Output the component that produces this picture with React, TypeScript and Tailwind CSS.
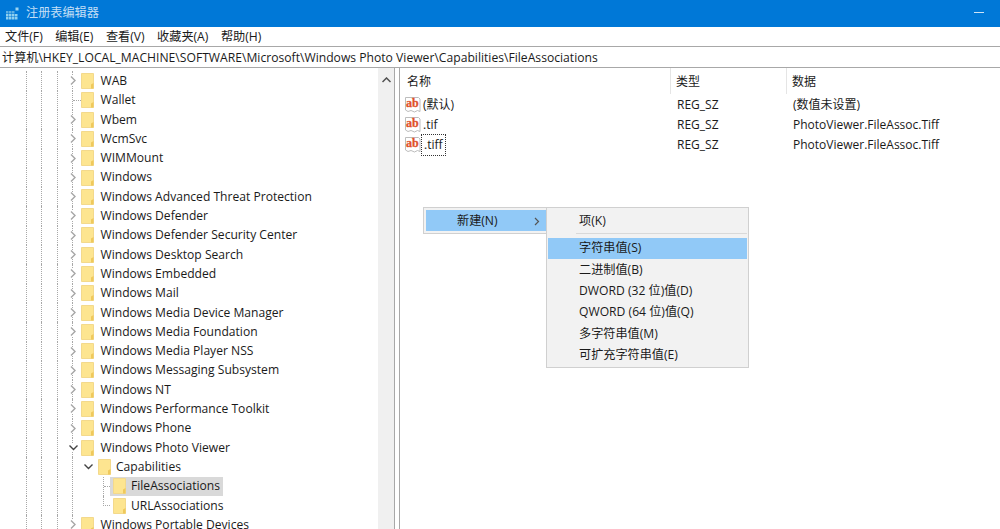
const names = [
  ["WAB", 1],
  ["Wallet", 0],
  ["Wbem", 1],
  ["WcmSvc", 1],
  ["WIMMount", 1],
  ["Windows", 1],
  ["Windows Advanced Threat Protection", 1],
  ["Windows Defender", 1],
  ["Windows Defender Security Center", 1],
  ["Windows Desktop Search", 1],
  ["Windows Embedded", 1],
  ["Windows Mail", 1],
  ["Windows Media Device Manager", 1],
  ["Windows Media Foundation", 1],
  ["Windows Media Player NSS", 1],
  ["Windows Messaging Subsystem", 1],
  ["Windows NT", 1],
  ["Windows Performance Toolkit", 1],
  ["Windows Phone", 1],
] as const;

const values = [
  { name: "(默认)", data: "(数值未设置)" },
  { name: ".tif", data: "PhotoViewer.FileAssoc.Tiff" },
  { name: ".tiff", data: "PhotoViewer.FileAssoc.Tiff", focused: true },
];

const subMenu = [
  "字符串值(S)",
  "二进制值(B)",
  "DWORD (32 位)值(D)",
  "QWORD (64 位)值(Q)",
  "多字符串值(M)",
  "可扩充字符串值(E)",
];

function Folder() {
  return (
    <svg width="13" height="16" viewBox="0 0 13 16" className="shrink-0">
      <path d="M.5.5h12v15H.5z" fill="#fde590" stroke="#f3d98c" />
      <path d="M10 15.500v-4l2.500-1.500v5.500z" fill="#efc95c" />
    </svg>
  );
}

function Chevron({ open }: { open?: boolean }) {
  return (
    <svg width="9" height="9" viewBox="0 0 9 9" className="shrink-0 bg-white">
      {open ? (
        <path d="M.5 2.500l4 4 4-4" fill="none" stroke="#444" strokeWidth="1.400" />
      ) : (
        <path d="M2 .5l4 4-4 4" fill="none" stroke="#a6a6a6" strokeWidth="1.400" />
      )}
    </svg>
  );
}

function AbIcon() {
  return (
    <svg width="16" height="18" viewBox="0 0 16 18" className="shrink-0">
      <path d="M.5 1.500h13l1.500 1.500v12.500l-2.500-1-3 1.500-3.500-1.500-3 1-2.500-1.500z" fill="#fff" stroke="#bdbdbd" />
      <text x="1" y="11" fontSize="12" fontWeight="700" fill="#e0502a" stroke="#e0502a" strokeWidth="0.300" fontFamily="Liberation Serif">ab</text>
    </svg>
  );
}

function VLine({ width }: { width: number }) {
  // widths are fixed, so pick from written-out classes
  const cls = width === 15 ? "w-[15px]" : width === 16 ? "w-[16px]" : "w-[12px]";
  return <div className={`${cls} h-full shrink-0 border-l border-dotted border-[#a8a8a8]`} />;
}

// the dotted guide lines of the tree
function Guides() {
  return (
    <>
      <div className="w-[26px] shrink-0" />
      <VLine width={15} />
      <VLine width={16} />
      <VLine width={15} />
    </>
  );
}

function Expander({ kids, open }: { kids: boolean; open?: boolean }) {
  return (
    <div className="w-[9px] h-full shrink-0 relative border-l border-dotted border-[#a8a8a8] flex items-center">
      {kids ? (
        <div className="absolute -left-[4px] top-[5px]">
          <Chevron open={open} />
        </div>
      ) : (
        <div className="w-[8px] border-t border-dotted border-[#a8a8a8]" />
      )}
    </div>
  );
}

function TreeRow({ label, kids, open }: { label: string; kids: boolean; open?: boolean }) {
  return (
    <div className="flex items-center h-[19.3px]">
      <Guides />
      <Expander kids={kids} open={open} />
      <Folder />
      <span className="ml-[6.500px] whitespace-nowrap">{label}</span>
    </div>
  );
}

function ChildRow({ label, selected, last }: { label: string; selected?: boolean; last?: boolean }) {
  return (
    <div className="flex items-center h-[19.3px]">
      <Guides />
      <div className="w-[31px] h-full shrink-0 border-l border-dotted border-[#a8a8a8]" />
      <div className={`w-[7px] shrink-0 border-l border-dotted border-[#a8a8a8] ${last ? "h-1/2 self-start border-b" : "h-full flex items-center"}`}>
        {!last && <div className="w-full border-t border-dotted border-[#a8a8a8]" />}
      </div>
      <div className={`flex items-center h-full pl-[3px] pr-[3px] gap-[5px] ${selected ? "bg-[#d9d9d9]" : ""}`}>
        <Folder />
        <span>{label}</span>
      </div>
    </div>
  );
}

export default function App() {
  return (
    <div className="w-[1000px] h-[529px] overflow-hidden bg-white flex flex-col text-[12.150px] leading-none text-[#1a1a1a] font-['Open_Sans','Noto_Sans_CJK_SC',sans-serif]">
      {/* title bar */}
      <div className="h-[27px] bg-[#0078d7] flex items-center pl-[6px] pr-[16px] shrink-0">
        <svg width="13" height="13" viewBox="0 0 13 13">
          <g fill="#8fd0f0">
            <rect x="0" y="4" width="2.500" height="2.500" fill="#5fb0e4" />
            <rect x="3" y="4" width="2.500" height="2.500" fill="#5fb0e4" />
            <rect x="6" y="4" width="2.500" height="2.500" fill="#5fb0e4" />
            <rect x="0" y="7" width="2.500" height="2.500" />
            <rect x="3" y="7" width="2.500" height="2.500" />
            <rect x="6" y="7" width="2.500" height="2.500" />
            <rect x="9" y="7" width="2.500" height="2.500" />
            <rect x="0" y="10" width="2.500" height="2.500" />
            <rect x="3" y="10" width="2.500" height="2.500" />
            <rect x="6" y="10" width="2.500" height="2.500" />
            <rect x="9" y="10" width="2.500" height="2.500" />
            <rect x="9.500" y="0.500" width="3" height="3" fill="#9ad4f2" />
          </g>
        </svg>
        <span className="ml-[7px] text-[#c4dff5]">注册表编辑器</span>
        <div className="ml-auto mb-[3px] w-[10px] h-[1px] bg-[#cfe4f6]" />
      </div>

      {/* menu */}
      <div className="h-[19px] flex items-center pl-[5px] pt-[1px] gap-[12.500px] shrink-0">
        <span>文件(F)</span>
        <span>编辑(E)</span>
        <span>查看(V)</span>
        <span>收藏夹(A)</span>
        <span>帮助(H)</span>
      </div>

      {/* address */}
      <div className="h-[22px] border-y border-[#a8a8a8] flex items-center pl-[2px] pt-[2px] shrink-0 whitespace-nowrap">
        计算机\HKEY_LOCAL_MACHINE\SOFTWARE\Microsoft\Windows Photo Viewer\Capabilities\FileAssociations
      </div>

      <div className="flex-1 flex min-h-0">
        {/* tree */}
        <div className="w-[378px] shrink-0 overflow-hidden pt-[3.4px] text-[12.100px]">
          {names.map(([n, k]) => (
            <TreeRow key={n} label={n} kids={k === 1} />
          ))}
          <TreeRow label="Windows Photo Viewer" kids open />
          <div className="flex items-center h-[19.3px]">
            <Guides />
            <VLine width={12} />
            <Chevron open />
            <div className="ml-[5px]">
              <Folder />
            </div>
            <span className="ml-[5px]">Capabilities</span>
          </div>
          <ChildRow label="FileAssociations" selected />
          <ChildRow label="URLAssociations" last />
          <TreeRow label="Windows Portable Devices" kids />
        </div>

        {/* scrollbar */}
        <div className="w-[16px] shrink-0 bg-[#f0f0f0] flex justify-center pt-[9px]">
          <svg width="9" height="6" viewBox="0 0 9 6">
            <path d="M.5 5l4-4 4 4" fill="none" stroke="#505050" strokeWidth="1.500" />
          </svg>
        </div>
        <div className="w-[6px] shrink-0 border-x border-[#a8a8a8]" />

        {/* values */}
        <div className="flex-1 relative text-[12px]">
          <div className="h-[26px] flex items-center">
            <div className="w-[271px] h-full pl-[7px] pt-[2px] flex items-center border-r border-[#e5e5e5]">名称</div>
            <div className="w-[116px] h-full pl-[5px] pt-[2px] flex items-center border-r border-[#e5e5e5]">类型</div>
            <div className="pl-[5px] pt-[2px]">数据</div>
          </div>
          {values.map((v) => (
            <div key={v.name} className="flex items-center h-[20px] pl-[5px] pt-[1px]">
              <div className="w-[272px] flex items-center">
                <AbIcon />
                <span className={v.focused ? "ml-[1px] px-[2px] py-[4px] outline-1 outline-dotted outline-[#333]" : "ml-[2px]"}>
                  {v.name}
                </span>
              </div>
              <div className="w-[116px]">REG_SZ</div>
              <div>{v.data}</div>
            </div>
          ))}

          {/* context menu */}
          <div className="absolute left-[23px] top-[139px] flex items-start text-[12.150px]">
            <div className="w-[123px] h-[27px] border border-[#d0d0d0] border-r-0 bg-[#f2f2f2] py-[2px] pl-[2px]">
              <div className="h-full bg-[#91c9f7] flex items-center pl-[31px] pt-[1px]">
                <span>新建(N)</span>
                <svg width="6" height="9" viewBox="0 0 6 9" className="ml-[36px]">
                  <path d="M1 1l3.500 3.500-3.500 3.500" fill="none" stroke="#555" strokeWidth="1.200" />
                </svg>
              </div>
            </div>
            <div className="w-[203px] h-[161px] border border-[#d0d0d0] bg-[#f2f2f2] p-[1px]">
              <div className="h-[23px] flex items-center pl-[31px] pt-[1px]">项(K)</div>
              <div className="ml-[28px] border-t border-[#d9d9d9] mt-[1px] mb-[4px]" />
              {subMenu.map((s, i) => (
                <div key={s} className={`h-[21.400px] flex items-center pl-[31px] pb-[1px] ${i === 0 ? "bg-[#91c9f7]" : ""}`}>
                  {s}
                </div>
              ))}
            </div>
          </div>
        </div>
      </div>
    </div>
  );
}
